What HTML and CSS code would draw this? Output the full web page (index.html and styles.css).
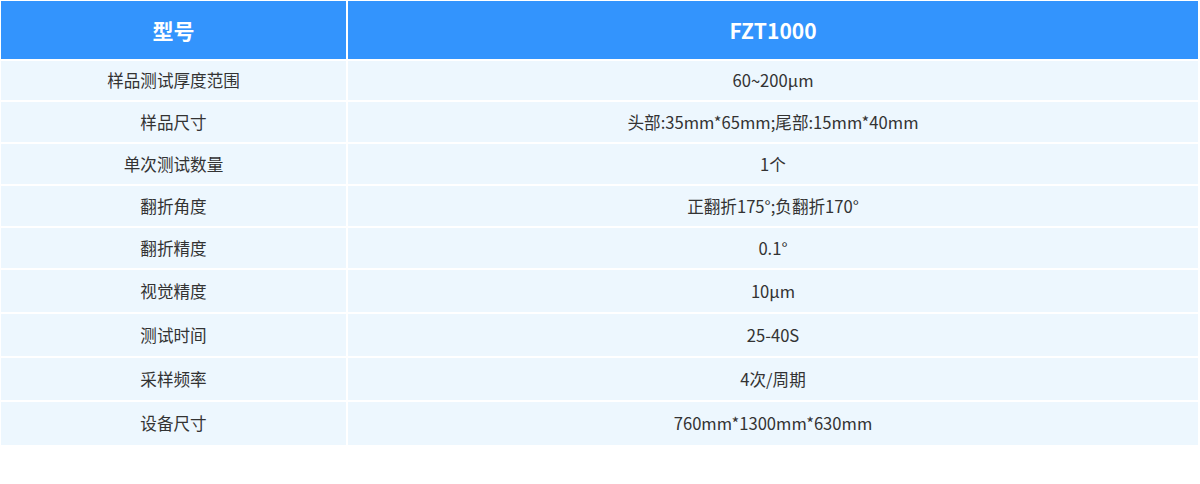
FILE: index.html
```html
<!DOCTYPE html>
<html lang="zh">
<head>
<meta charset="utf-8">
<link rel="stylesheet" href="styles.css">
</head>
<body>
<div class="spec">
  <div class="row head"><div class="cell">型号</div><div class="cell">FZT1000</div></div>
  <div class="row r1"><div class="cell">样品测试厚度范围</div><div class="cell">60~200μm</div></div>
  <div class="row r2"><div class="cell">样品尺寸</div><div class="cell">头部:35mm*65mm;尾部:15mm*40mm</div></div>
  <div class="row r2"><div class="cell">单次测试数量</div><div class="cell">1个</div></div>
  <div class="row r2"><div class="cell">翻折角度</div><div class="cell">正翻折175°;负翻折170°</div></div>
  <div class="row r2"><div class="cell">翻折精度</div><div class="cell">0.1°</div></div>
  <div class="row r3"><div class="cell">视觉精度</div><div class="cell">10μm</div></div>
  <div class="row r3"><div class="cell">测试时间</div><div class="cell">25-40S</div></div>
  <div class="row r3"><div class="cell">采样频率</div><div class="cell">4次/周期</div></div>
  <div class="row r4"><div class="cell">设备尺寸</div><div class="cell">760mm*1300mm*630mm</div></div>
</div>
</body>
</html>
```

FILE: styles.css
```css
html, body {
  margin: 0;
  padding: 0;
  background: #ffffff;
}
body {
  font-family: "Noto Sans CJK SC", "Noto Sans", sans-serif;
  color: #333333;
}
.spec {
  width: 1197px;
  padding: 1px 0 0 1px;
  display: flex;
  flex-direction: column;
  gap: 2px;
}
.row {
  display: grid;
  grid-template-columns: 345px 1fr;
  gap: 2px;
}
.cell {
  display: flex;
  align-items: center;
  justify-content: center;
  background: #edf7fe;
  font-size: 16.6px;
  line-height: 1;
}
.head .cell {
  background: #3394fd;
  color: #ffffff;
  font-weight: 700;
  font-size: 21px;
  height: 58px;
}
.r1 .cell { height: 39px; }
.r2 .cell { height: 40px; }
.r3 .cell { height: 42px; }
.r4 .cell { height: 43px; }
```
